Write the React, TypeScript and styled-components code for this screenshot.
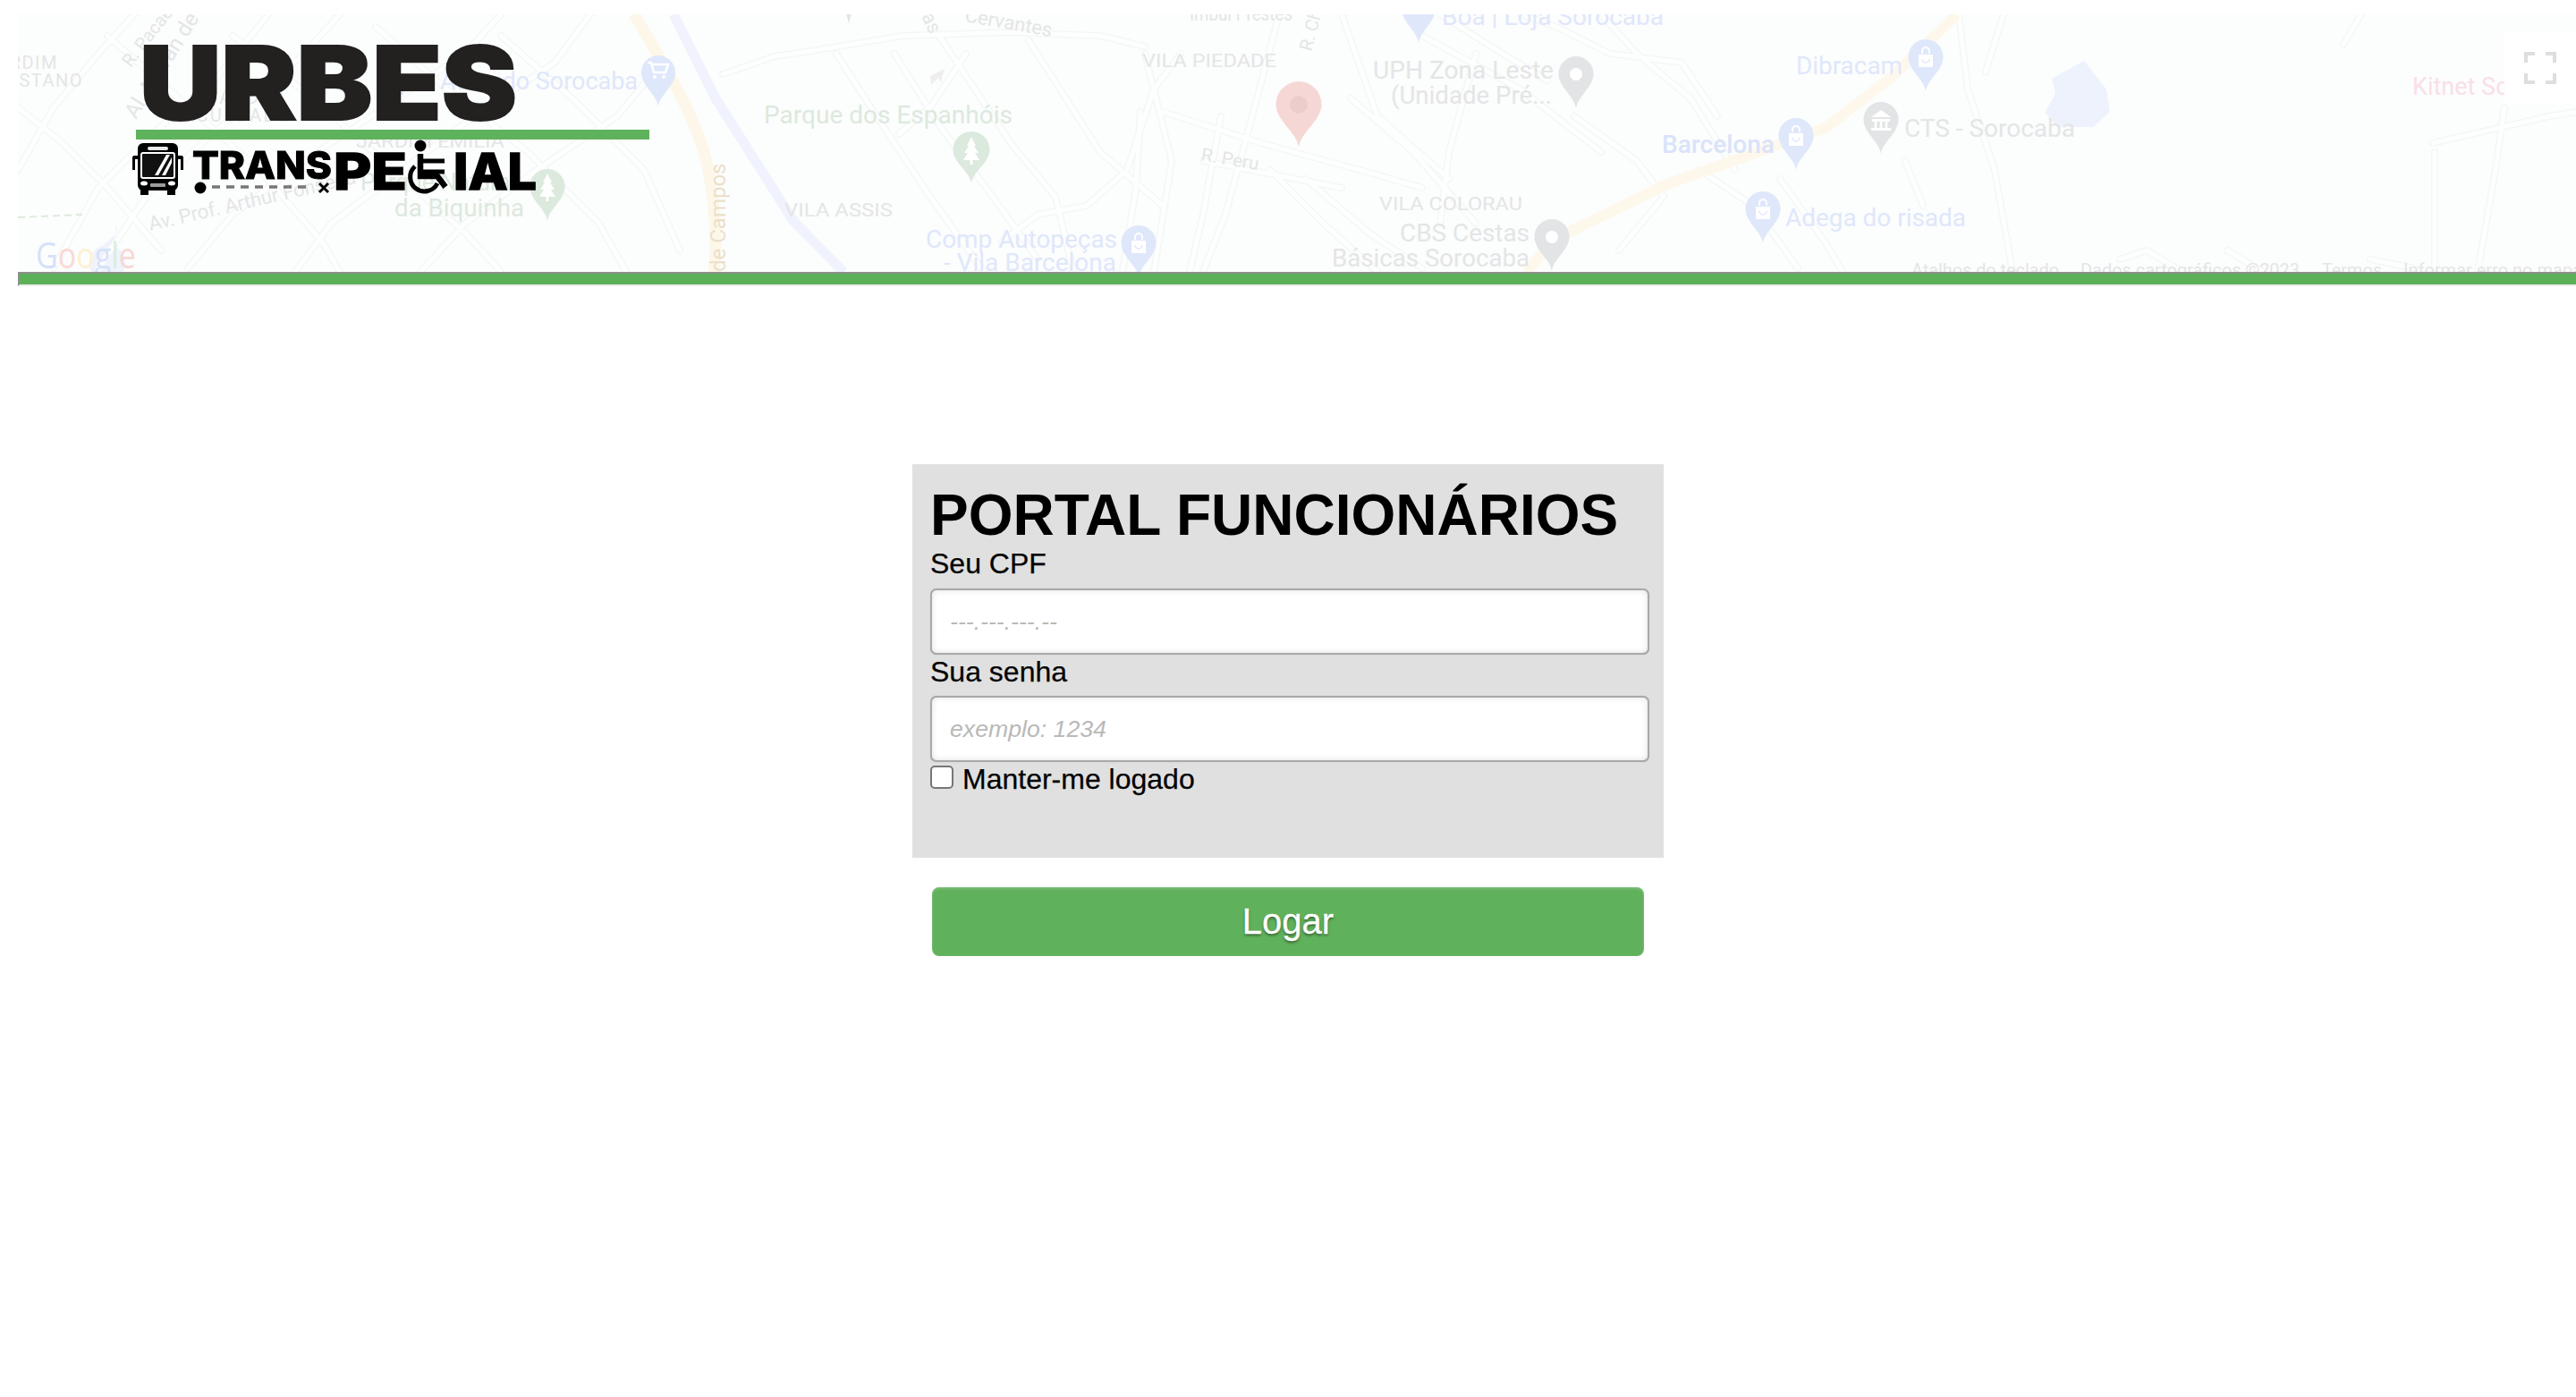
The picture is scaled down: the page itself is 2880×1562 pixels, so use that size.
import React from "react";
import styled, { createGlobalStyle } from "styled-components";

const Global = createGlobalStyle`
  html, body { margin: 0; padding: 0; background: #fff; }
  body { font-family: "Liberation Sans", Arial, sans-serif; color: #000; }
  * { box-sizing: border-box; }
`;

const Page = styled.div`
  min-height: 1562px;
  background: #fff;
  overflow: hidden;
`;
const Header = styled.header`
  margin: 16px 0 0 20px;
`;
const MapFrame = styled.div`
  position: relative;
  height: 288px;
  overflow: hidden;
  background: #fcfdfd;
`;
const MapCanvas = styled.svg`
  display: block;
  width: 2860px;
  height: 288px;
  font-family: Roboto, "Liberation Sans", sans-serif;
`;
const LogoArt = styled.svg`
  position: absolute;
  left: 0;
  top: 0;
  width: 2860px;
  height: 288px;
  filter: blur(0.5px);
  font-family: Inter, "Liberation Sans", sans-serif;
`;
const ExpandButton = styled.div`
  position: absolute;
  right: 0;
  top: 20px;
  width: 80px;
  height: 80px;
  background: #fff;
  border-radius: 4px 0 0 4px;
  display: flex;
  align-items: center;
  justify-content: center;
`;
const GreenRule = styled.hr`
  box-sizing: content-box;
  height: 12px;
  margin: 0;
  background: #5cb158;
  border-style: solid;
  border-width: 2px 0 2px 2px;
  border-color: #8f8f8f #ececec #ececec #8f8f8f;
`;
const Main = styled.main`
  display: flex;
  flex-direction: column;
  align-items: center;
  padding-top: 199px;
`;
const Panel = styled.form`
  width: 840px;
  height: 440px;
  padding: 21px 16px 0 20px;
  background: #e0e0e0;
`;
const Title = styled.h1`
  margin: 0;
  font-size: 64px;
  line-height: 72px;
  font-weight: 700;
`;
const FieldLabel = styled.label<{ $gap: number; $top?: number }>`
  display: block;
  font-size: 32px;
  line-height: 37px;
  -webkit-text-stroke: 0.25px #000;
  margin-top: ${(p) => p.$top ?? 0}px;
  margin-bottom: ${(p) => p.$gap}px;
`;
const TextInput = styled.input`
  display: block;
  width: 804px;
  height: 74px;
  padding: 0 20px;
  border: 2px solid #a9a9a9;
  border-radius: 7px;
  background: #fff;
  box-shadow: 0 0 1px #a9a9a9, inset 0 0 7px rgba(0, 0, 0, 0.12);
  font-family: "Liberation Sans", Arial, sans-serif;
  font-size: 26.67px;
  outline: none;
  &::placeholder {
    color: #b9b9b9;
    font-style: italic;
    opacity: 1;
  }
`;
const CheckRow = styled.label`
  display: flex;
  align-items: flex-start;
  gap: 10px;
  margin-top: 1px;
  font-size: 32px;
  line-height: 37px;
  -webkit-text-stroke: 0.25px #000;
`;
const CheckBox = styled.input`
  appearance: none;
  flex: none;
  width: 26px;
  height: 26px;
  margin: 3px 0 0;
  background: #fff;
  border: 2px solid #767676;
  border-radius: 5px;
`;
const LoginButton = styled.button`
  width: 796px;
  height: 77px;
  margin-top: 33px;
  border: 0;
  border-radius: 8px;
  background: #60b15b;
  box-shadow: inset 0 2px 3px rgba(255, 255, 255, 0.16), inset 0 0 3px rgba(255, 255, 255, 0.12);
  color: #fff;
  font-family: "Liberation Sans", Arial, sans-serif;
  font-size: 40px;
  -webkit-text-stroke: 0.3px #fff;
  text-shadow: 0 2px 3px rgba(0, 0, 0, 0.45);
`;

const GRAY = "#e4e5e6";
const BLUE = "#dfe7fb";
const GREEN = "#dce9dd";

type Label = { t: string; x: number; y: number; w?: number; c: string; s?: number; r?: number; ls?: number; end?: boolean; b?: boolean };

const FOOT_Y = 309;

const labels: Label[] = [
  { t: "JARDIM", x: 65, y: 77, c: GRAY, s: 20, ls: 1.5, end: true },
  { t: "CASTANO", x: 93, y: 97, c: GRAY, s: 20, ls: 1.5, end: true },
  { t: "R. Pacaembu", x: 146, y: 76, c: GRAY, s: 20, r: -52 },
  { t: "Al. Marãn de", x: 152, y: 134, c: GRAY, s: 24, r: -58 },
  { t: "JARDIM", x: 232, y: 116, c: GRAY, s: 20, ls: 2.5 },
  { t: "FACULDADE", x: 192, y: 136, c: GRAY, s: 20, ls: 2.5 },
  { t: "JARDIM EMILIA", x: 398, y: 165, w: 166, c: GRAY, s: 20 },
  { t: "Hiper Atacado Sorocaba", x: 421, y: 100, w: 292, c: BLUE, s: 27 },
  { t: "Parque Natural", x: 403, y: 213, w: 174, c: GREEN, s: 27 },
  { t: "da Biquinha", x: 441, y: 242, w: 145, c: GREEN, s: 27 },
  { t: "Av. Prof. Arthur Fonseca", x: 168, y: 258, c: GRAY, s: 22, r: -13 },
  { t: "de Campos", x: 811, y: 304, c: "#ecdfc8", s: 24, r: -90 },
  { t: "as", x: 1030, y: 18, c: GRAY, s: 22, r: 65 },
  { t: "Cervantes", x: 1078, y: 24, c: GRAY, s: 22, r: 10 },
  { t: "Imbuí Prestes", x: 1330, y: 23, w: 115, c: GRAY, s: 24 },
  { t: "R. Ch", x: 1466, y: 58, c: GRAY, s: 20, r: -75 },
  { t: "VILA PIEDADE", x: 1277, y: 75, w: 150, c: GRAY, s: 20 },
  { t: "Parque dos Espanhóis", x: 854, y: 138, w: 278, c: GREEN, s: 27 },
  { t: "R. Peru", x: 1342, y: 179, w: 65, c: GRAY, s: 20, r: 10 },
  { t: "VILA ASSIS", x: 877, y: 242, w: 121, c: GRAY, s: 20 },
  { t: "Comp Autopeças", x: 1035, y: 277, w: 214, c: BLUE, s: 27 },
  { t: "- Vila Barcelona", x: 1055, y: 303, w: 193, c: BLUE, s: 27 },
  { t: "UPH Zona Leste", x: 1535, y: 88, w: 202, c: GRAY, s: 27 },
  { t: "(Unidade Pré...", x: 1555, y: 116, w: 180, c: GRAY, s: 27 },
  { t: "VILA COLORAU", x: 1542, y: 235, w: 160, c: GRAY, s: 20 },
  { t: "CBS Cestas", x: 1565, y: 270, w: 145, c: GRAY, s: 27 },
  { t: "Básicas Sorocaba", x: 1489, y: 298, w: 221, c: GRAY, s: 27 },
  { t: "Boa | Loja Sorocaba", x: 1612, y: 28, w: 248, c: BLUE, s: 27 },
  { t: "Dibracam", x: 2008, y: 83, w: 119, c: BLUE, s: 27 },
  { t: "Barcelona", x: 1858, y: 171, w: 126, c: "#d9e3fa", s: 27, b: true },
  { t: "CTS - Sorocaba", x: 2129, y: 153, w: 191, c: GRAY, s: 27 },
  { t: "Adega do risada", x: 1996, y: 253, w: 202, c: BLUE, s: 27 },
  { t: "Kitnet Sorocaba", x: 2697, y: 106, c: "#f9dfe7", s: 27 },
  { t: "Atalhos do teclado", x: 2137, y: FOOT_Y, w: 165, c: GRAY, s: 20 },
  { t: "Dados cartográficos ©2023", x: 2326, y: FOOT_Y, w: 245, c: GRAY, s: 20 },
  { t: "Termos", x: 2596, y: FOOT_Y, w: 67, c: GRAY, s: 20 },
  { t: "Informar erro no mapa", x: 2687, y: FOOT_Y, w: 200, c: GRAY, s: 20 },
];

const roads: string[] = [
  "20,190 60,120 110,60 150,16", "60,300 110,210 170,150 240,90 300,16", "110,300 170,210 260,130 340,60 380,16",
  "210,300 260,240 340,180 430,120 520,60 560,16", "330,304 370,250 450,190 530,130 620,70 660,16",
  "470,304 520,250 600,190 690,130 740,70", "20,120 70,160 120,210 180,280", "120,40 200,110 290,190 360,270 380,304",
  "260,40 350,110 440,190 520,260 560,304", "420,30 500,100 590,170 670,250 700,304", "560,40 640,110 720,190 760,280",
  "808,83 866,63 907,57 1010,40 1130,36 1230,40 1280,52", "935,60 980,130 1040,220 1100,304", "1000,60 1050,140 1110,220 1160,290",
  "1080,60 1040,120 1005,150", "1050,40 1130,160 1180,220 1200,304", "1150,45 1230,170 1300,230",
  "1120,270 1160,240 1215,230 1260,190 1290,100 1320,60", "1275,125 1270,210 1255,304", "1300,125 1410,160 1520,190 1590,210",
  "1280,60 1310,180 1290,304", "1365,130 1345,240 1330,304", "1430,16 1400,130 1370,240 1345,304", "1345,180 1500,210",
  "1420,190 1480,250 1540,304", "1460,200 1530,260 1590,300", "1500,16 1540,130 1620,200", "1590,40 1700,100 1790,170",
  "1610,16 1680,60 1730,90", "1510,110 1580,170 1650,250", "1650,60 1620,170 1610,250", "1700,16 1740,30 1800,60 1880,70 1920,130",
  "1790,16 1830,60 1890,110 1940,190", "1760,130 1830,180 1860,220 1810,280", "1900,190 1960,230 2010,300", "1990,200 2040,270 2060,304",
  "2130,180 2150,230", "2190,16 2200,100 2230,190 2250,304", "2240,16 2220,80", "2640,16 2620,50", "2720,160 2850,130 2880,125",
  "2722,170 2722,304", "2800,120 2790,190 2770,304", "2650,290 2700,300", "2370,290 2400,280 2440,304", "2490,280 2530,304",
];

const Pin = ({ x, top, w, h, fill, children }: { x: number; top: number; w: number; h: number; fill: string; children?: React.ReactNode }) => {
  const r = w / 2;
  return (
    <g transform={`translate(${x} ${top})`}>
      <path d={`M0,${h} C-2,${h * 0.76} ${-r},${h * 0.6} ${-r},${r} A${r},${r} 0 1 1 ${r},${r} C${r},${h * 0.6} 2,${h * 0.76} 0,${h} Z`} fill={fill} />
      {children}
    </g>
  );
};
const Bag = () => (
  <g>
    <path d="M-8,-1 H8 V13 H-8 Z" fill="#fff" />
    <path d="M-4,-2 V-5 A4,4 0 0 1 4,-5 V-2" fill="none" stroke="#fff" strokeWidth="2" />
    <path d="M-4,4 A4,4 0 0 0 4,4" fill="none" stroke="#dfe7fb" strokeWidth="1.5" />
  </g>
);
const Tree = () => <path d="M0,-13 L5,-3 H3 L8,5 H4 L9,13 H1.5 V18 H-1.5 V13 H-9 L-4,5 H-8 L-3,-3 H-5 Z" fill="#fff" />;

const shop = (x: number, top: number) => (
  <Pin key={`s${x}`} x={x} top={top} w={39} h={58} fill={BLUE}>
    <g transform="translate(0 18)">
      <Bag />
    </g>
  </Pin>
);

const MapArt = () => (
  <MapCanvas viewBox="20 16 2860 288">
    <rect x="20" y="16" width="2860" height="288" fill="#fcfdfd" />
    <path d="M2330,68 L2355,100 L2359,125 L2340,142 L2300,142 L2286,126 L2298,105 L2294,88 Z" fill="#eef2fc" />
    <path d="M100,300 C104,272 135,268 130,252 L122,296 Z" fill="#eef2fc" />
    <circle cx="120" cy="294" r="20" fill="#eff3fc" />
    <path d="M753,16 L800,110 L887,247 L943,304" fill="none" stroke="#f0f3fd" strokeWidth="11" />
    {roads.map((d) => (
      <polyline key={`c${d}`} points={d} fill="none" stroke="#f5f6f6" strokeWidth="8" strokeLinejoin="round" strokeLinecap="round" />
    ))}
    {roads.map((d) => (
      <polyline key={`i${d}`} points={d} fill="none" stroke="#fdfefe" strokeWidth="5" strokeLinejoin="round" strokeLinecap="round" />
    ))}
    <path d="M709,16 C740,70 780,130 792,190 C800,240 802,270 798,304" fill="none" stroke="#fdf7ea" strokeWidth="13" />
    <path d="M2188,16 L2114,87 L2041,143 L1861,207 L1739,267 L1706,304" fill="none" stroke="#fef8ec" strokeWidth="12" strokeLinejoin="round" />
    <path d="M20,243 L92,240" fill="none" stroke="#dcebdd" strokeWidth="2" strokeDasharray="8 5" />
    <path d="M1040,85 L1056,77 L1052,92 L1049,87 L1041,95 Z" fill="#eeeeee" />
    {labels.map((l) => (
      <text
        key={l.t + l.x}
        x={l.x}
        y={l.y}
        fill={l.c}
        fontSize={l.s}
        fontWeight={l.b ? 500 : 400}
        letterSpacing={l.ls}
        textAnchor={l.end ? "end" : "start"}
        textLength={l.w}
        lengthAdjust={l.w ? "spacingAndGlyphs" : undefined}
        transform={l.r ? `rotate(${l.r} ${l.x} ${l.y})` : undefined}
      >
        {l.t}
      </text>
    ))}
    <text x="40" y="300" fontSize="40" textLength="112" lengthAdjust="spacingAndGlyphs" fontFamily="'Open Sans', Roboto, sans-serif">
      <tspan fill="#d6e1fa">G</tspan>
      <tspan fill="#f8d9d6">o</tspan>
      <tspan fill="#fdf1d2">o</tspan>
      <tspan fill="#d6e1fa">g</tspan>
      <tspan fill="#d8eedd">l</tspan>
      <tspan fill="#f8d9d6">e</tspan>
    </text>
    <Pin x={736} top={62} w={38} h={57} fill={BLUE}>
      <path d="M-12,8 H-8 L-5,19 H8 L11,10 H-7" fill="none" stroke="#fff" strokeWidth="2.5" />
      <circle cx="-4" cy="24" r="2" fill="#fff" />
      <circle cx="6" cy="24" r="2" fill="#fff" />
    </Pin>
    <Pin x={612} top={189} w={39} h={58} fill={GREEN}>
      <g transform="translate(0 18)">
        <Tree />
      </g>
    </Pin>
    <Pin x={1086} top={147} w={41} h={58} fill={GREEN}>
      <g transform="translate(0 19)">
        <Tree />
      </g>
    </Pin>
    <Pin x={949} top={-31} w={20} h={58} fill={GRAY} />
    <Pin x={1586} top={-10} w={38} h={58} fill={BLUE} />
    <Pin x={1452} top={91} w={51} h={74} fill="#f5d8d5">
      <circle cx="0" cy="26" r="10" fill="#edcdcb" />
    </Pin>
    {shop(1273, 252)}
    {shop(2153, 44)}
    {shop(2008, 132)}
    {shop(1971, 214)}
    <Pin x={1762} top={63} w={39} h={58} fill="#e2e4e5">
      <circle cx="0" cy="20" r="7" fill="#fff" />
    </Pin>
    <Pin x={1735} top={245} w={39} h={58} fill="#e2e4e5">
      <circle cx="0" cy="20" r="7" fill="#fff" />
    </Pin>
    <Pin x={2103} top={114} w={39} h={58} fill="#e2e4e5">
      <path d="M0,9 L11,17 H-11 Z M-10,19 H10 V22 H-10 Z M-11,29 H11 V32 H-11 Z" fill="#fff" />
      <path d="M-6,22 V29 M0,22 V29 M6,22 V29" stroke="#fff" strokeWidth="2.5" />
    </Pin>
  </MapCanvas>
);

const Logo = () => (
  <LogoArt viewBox="20 16 2860 288">
    <text x="156" y="134" fontSize="114" fontWeight="900" fill="#222120" stroke="#222120" strokeWidth="2" textLength="422" lengthAdjust="spacingAndGlyphs">
      URBES
    </text>
    <rect x="152" y="145" width="574" height="11" fill="#5fb25c" />
    {/* bus */}
    <rect x="154" y="160" width="45" height="53" rx="6" fill="#000" />
    <path d="M154,174 H150 Q148,174 148,177 V190 H151 V178 H154 Z M199,174 H203 Q205,174 205,177 V190 H202 V178 H199 Z" fill="#000" />
    <rect x="165" y="164" width="23" height="4" rx="2" fill="#e8e8e8" />
    <rect x="158" y="171" width="37" height="28" rx="2" fill="#111" stroke="#fff" strokeWidth="2" />
    <path d="M173,196 L186,173 H190 L177,196 Z M181,196 L192,176 V182 L185,196 Z" fill="#fff" />
    <ellipse cx="161" cy="205" rx="4" ry="2.5" fill="#fff" />
    <ellipse cx="192" cy="205" rx="4" ry="2.5" fill="#fff" />
    <rect x="168" y="205" width="17" height="4" rx="1" fill="#9b9b9b" />
    <rect x="157" y="212" width="9" height="6" fill="#000" />
    <rect x="187" y="212" width="9" height="6" fill="#000" />
    {/* wordmark */}
    <text x="215" y="200" fontSize="43" fontWeight="800" fill="#000" stroke="#000" strokeWidth="1" textLength="156" lengthAdjust="spacingAndGlyphs">
      TRANS
    </text>
    <circle cx="224" cy="210" r="6.5" fill="#000" />
    <path d="M237,209 H348" stroke="#777" strokeWidth="3.5" strokeDasharray="9 7" />
    <path d="M357,205 L367,215 M367,205 L357,215" stroke="#000" strokeWidth="3" />
    <text x="373" y="212" fontSize="57" fontWeight="800" fill="#000" stroke="#000" strokeWidth="1.5" textLength="82" lengthAdjust="spacingAndGlyphs">
      PE
    </text>
    <circle cx="470" cy="163" r="6.5" fill="#000" />
    <path d="M473,180 H497 M473,192 H497" stroke="#000" strokeWidth="5" />
    <path d="M470,172 V197 H489 L498,209" fill="none" stroke="#000" strokeWidth="6.5" />
    <path d="M464,186 A16,16 0 1 0 489,205" fill="none" stroke="#000" strokeWidth="5" />
    <text x="507" y="212" fontSize="57" fontWeight="800" fill="#000" stroke="#000" strokeWidth="1.5" textLength="93" lengthAdjust="spacingAndGlyphs">
      IAL
    </text>
  </LogoArt>
);

const ExpandIcon = () => (
  <svg width="36" height="36" viewBox="0 0 36 36">
    <path d="M2,12 V2 H12 M24,2 H34 V12 M34,24 V34 H24 M12,34 H2 V24" fill="none" stroke="#dedede" strokeWidth="4" />
  </svg>
);

export default function App() {
  return (
    <Page>
      <Global />
      <Header>
        <MapFrame>
          <MapArt />
          <Logo />
          <ExpandButton>
            <ExpandIcon />
          </ExpandButton>
        </MapFrame>
        <GreenRule />
      </Header>
      <Main>
        <Panel onSubmit={(e) => e.preventDefault()}>
          <Title>PORTAL FUNCIONÁRIOS</Title>
          <FieldLabel htmlFor="cpf" $gap={9}>Seu CPF</FieldLabel>
          <TextInput id="cpf" placeholder="---.---.---.--" />
          <FieldLabel htmlFor="senha" $top={1} $gap={8}>Sua senha</FieldLabel>
          <TextInput id="senha" type="password" placeholder="exemplo: 1234" />
          <CheckRow>
            <CheckBox type="checkbox" />
            Manter-me logado
          </CheckRow>
        </Panel>
        <LoginButton type="button">Logar</LoginButton>
      </Main>
    </Page>
  );
}
